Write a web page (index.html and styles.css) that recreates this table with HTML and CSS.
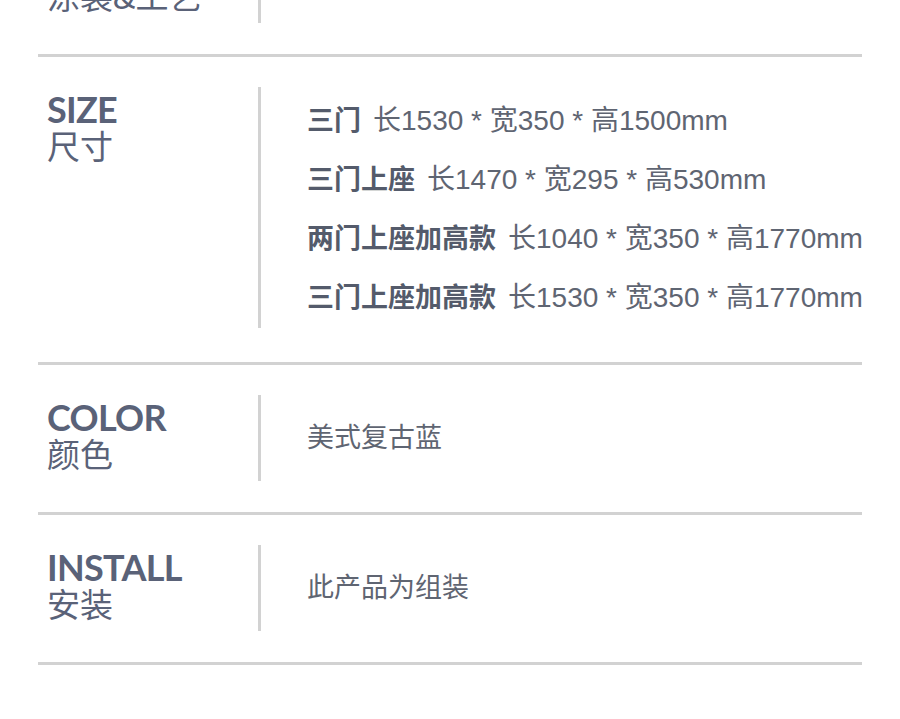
FILE: index.html
```html
<!DOCTYPE html>
<html lang="zh-CN">
<head>
<meta charset="utf-8">
<title>产品参数</title>
<link rel="stylesheet" href="styles.css">
</head>
<body>
<div class="spec">
  <div class="row">
    <div class="label"><div class="en">CRAFT</div><div class="zh">涂装&amp;工艺</div></div>
    <div class="value"></div>
  </div>
  <div class="rule"></div>
  <div class="row row-size">
    <div class="label"><div class="en">SIZE</div><div class="zh">尺寸</div></div>
    <div class="value">
      <div class="sizes">
        <div class="line"><b>三门</b>长1530 * 宽350 * 高1500mm</div>
        <div class="line"><b>三门上座</b>长1470 * 宽295 * 高530mm</div>
        <div class="line"><b>两门上座加高款</b>长1040 * 宽350 * 高1770mm</div>
        <div class="line"><b>三门上座加高款</b>长1530 * 宽350 * 高1770mm</div>
      </div>
    </div>
  </div>
  <div class="rule"></div>
  <div class="row">
    <div class="label"><div class="en">COLOR</div><div class="zh">颜色</div></div>
    <div class="value"><div class="line">美式复古蓝</div></div>
  </div>
  <div class="rule"></div>
  <div class="row">
    <div class="label"><div class="en">INSTALL</div><div class="zh">安装</div></div>
    <div class="value"><div class="line">此产品为组装</div></div>
  </div>
  <div class="rule"></div>
</div>
</body>
</html>
```

FILE: styles.css
```css
html, body {
  margin: 0;
  padding: 0;
  background: #ffffff;
}

body {
  overflow: hidden;
}

.spec {
  margin: -93px 0 0 38px;
  width: 824px;
}

.row {
  display: grid;
  grid-template-columns: 220px 1fr;
  min-height: 86px;
  padding: 30px 0 31px;
}

.row-size {
  padding-bottom: 34px;
}

.rule {
  height: 3px;
  background: #d2d2d2;
}

.label {
  padding: 4px 0 0 9px;
  color: #5a6278;
}

.label .en {
  font-family: Lato, "Open Sans", sans-serif;
  font-weight: 700;
  font-size: 36px;
  line-height: 36px;
  letter-spacing: -0.7px;
}

.label .zh {
  font-family: "Noto Sans CJK SC", sans-serif;
  font-weight: 400;
  font-size: 33px;
  line-height: 36px;
}

.value {
  border-left: 3px solid #d2d2d2;
  padding-left: 46px;
  display: flex;
  flex-direction: column;
  justify-content: center;
  color: #5f6572;
  font-family: "Liberation Sans", "Noto Sans CJK SC", sans-serif;
  font-size: 27px;
}

.sizes {
  padding: 4px 0 1px;
  font-size: 28px;
}

.line {
  height: 59px;
  line-height: 59px;
  white-space: nowrap;
}

.line b {
  font-family: "Noto Sans CJK SC", sans-serif;
  font-weight: 700;
  font-size: 27px;
  line-height: 1;
  color: #545b6b;
  margin-right: 12px;
}
```
